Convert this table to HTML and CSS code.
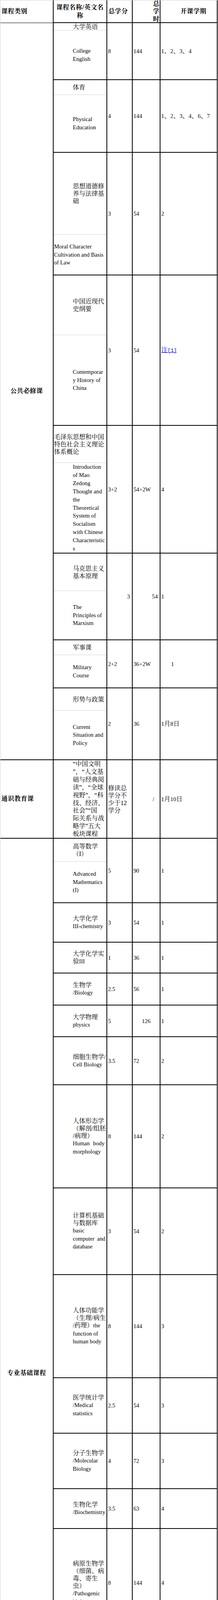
FILE: index.html
```html
<!DOCTYPE html>
<html lang="zh">
<head>
<meta charset="utf-8">
<title>课程设置</title>
<link rel="stylesheet" href="styles.css">
</head>
<body>
<div class="sheet">
  <div class="c cat hd left">课程类别</div>
  <div class="c hd hname"><div>课程名称/英文名<br>称</div></div>
  <div class="c hd hcred">总学分</div>
  <div class="c hd hstack"><div>总<br>学<br>时</div></div>
  <div class="c hd hterm">开课学期</div>

  <div class="c cat hd thick span8">公共必修课</div>

  <div class="c nm split"><div class="top t19 in"><div class="z">大学英语</div></div><div class="bot in"><div class="e">College<br>English</div></div></div>
  <div class="c v">8</div><div class="c v">144</div><div class="c v">1<span class="zc">、</span>2<span class="zc">、</span>3<span class="zc">、</span>4</div>

  <div class="c nm split"><div class="top t38 in"><div class="z">体育</div></div><div class="bot in"><div class="e">Physical<br>Education</div></div></div>
  <div class="c v">4</div><div class="c v">144</div><div class="c v">1<span class="zc">、</span>2<span class="zc">、</span>3<span class="zc">、</span>4<span class="zc">、</span>6<span class="zc">、</span>7</div>

  <div class="c nm split"><div class="top t210 in"><div class="z">思想道德修<br>养与法律基<br>础</div></div><div class="bot"><div class="e">Moral Character<br>Cultivation and Basis<br>of Law</div></div></div>
  <div class="c v">3</div><div class="c v">54</div><div class="c v">2</div>

  <div class="c nm split"><div class="top t153 in"><div class="z">中国近现代<br>史纲要</div></div><div class="bot in"><div class="e">Contemporar<br>y History of<br>China</div></div></div>
  <div class="c v">3</div><div class="c v">54</div><div class="c v"><a class="note" href="#">注<span class="br">[1]</span></a></div>

  <div class="c nm split"><div class="top t95"><div class="z">毛泽东思想和中国<br>特色社会主义理论<br>体系概论</div></div><div class="bot in"><div class="e l21">Introduction<br>of Mao<br>Zedong<br>Thought and<br>the<br>Theoretical<br>System of<br>Socialism<br>with Chinese<br>Characteristic<br>s</div></div></div>
  <div class="c v">3+2</div><div class="c v">54+2W</div><div class="c v">4</div>

  <div class="c nm split"><div class="top t96 in"><div class="z">马克思主义<br>基本原理</div></div><div class="bot in"><div class="e">The<br>Principles of<br>Marxism</div></div></div>
  <div class="c v vr">3</div><div class="c v vr">54</div><div class="c v">1</div>

  <div class="c nm split"><div class="top t38 in"><div class="z">军事课</div></div><div class="bot in"><div class="e">Military<br>Course</div></div></div>
  <div class="c v">2+2</div><div class="c v">36+2W</div><div class="c v p27">1</div>

  <div class="c nm split"><div class="top t57 in"><div class="z">形势与政策</div></div><div class="bot in"><div class="e">Current<br>Situation and<br>Policy</div></div></div>
  <div class="c v">2</div><div class="c v">36</div><div class="c v">1<span class="zc">月</span>8<span class="zc">日</span></div>

  <div class="c cat hd thick left">通识教育课</div>
  <div class="c nm in"><div class="z tall">“中国文明<br>”，“人文基<br>础与经典阅<br>读”，“全球<br>视野”，“科<br>技、经济、<br>社会”“国<br>际关系与战<br>略学”五大<br>板块课程</div></div>
  <div class="c v"><div class="z">修读总<br>学分不<br>少于12<br>学分</div></div>
  <div class="c v p51">/</div>
  <div class="c v">1<span class="zc">月</span>10<span class="zc">日</span></div>

  <div class="c cat hd span19">专业基础课程</div>

  <div class="c nm split"><div class="top t59 in"><div class="z">高等数学<br>（I）</div></div><div class="bot in"><div class="e">Advanced<br>Mathematics<br>(I)</div></div></div>
  <div class="c v">5</div><div class="c v">90</div><div class="c v">1</div>

  <div class="c nm in"><div class="z">大学化学</div><div class="e">III-chemistry</div></div>
  <div class="c v">3</div><div class="c v">54</div><div class="c v">1</div>

  <div class="c nm in"><div class="z">大学化学实</div><div class="e"><span class="zc">验</span>III</div></div>
  <div class="c v">1</div><div class="c v">36</div><div class="c v">1</div>

  <div class="c nm in"><div class="z">生物学</div><div class="e">/Biology</div></div>
  <div class="c v">2.5</div><div class="c v">56</div><div class="c v">1</div>

  <div class="c nm in"><div class="z">大学物理</div><div class="e">physics</div></div>
  <div class="c v">5</div><div class="c v vc">126</div><div class="c v">1</div>

  <div class="c nm in"><div class="z">细胞生物学/</div><div class="e">Cell Biology</div></div>
  <div class="c v">3.5</div><div class="c v">72</div><div class="c v">2</div>

  <div class="c nm in"><div class="z">人体形态学<br>（解剖/组胚<br>/病理）</div><div class="e"><span class="ws">Human body</span><br>morphology</div></div>
  <div class="c v">8</div><div class="c v">144</div><div class="c v">2</div>

  <div class="c nm in"><div class="z">计算机基础<br>与数据库</div><div class="e">basic<br><span class="ws2">computer and</span><br>database</div></div>
  <div class="c v">3</div><div class="c v">54</div><div class="c v">2</div>

  <div class="c nm in"><div class="z">人体功能学<br>（生理/病生</div><div class="e">/<span class="zc">药理）</span>the<br>function of<br>human body</div></div>
  <div class="c v">8</div><div class="c v">144</div><div class="c v">3</div>

  <div class="c nm in"><div class="z">医学统计学</div><div class="e">/Medical<br>statistics</div></div>
  <div class="c v">2.5</div><div class="c v">54</div><div class="c v">3</div>

  <div class="c nm in"><div class="z">分子生物学</div><div class="e">/Molecular<br>Biology</div></div>
  <div class="c v">4</div><div class="c v">72</div><div class="c v">3</div>

  <div class="c nm in"><div class="z">生物化学</div><div class="e">/Biochemistry</div></div>
  <div class="c v">3.5</div><div class="c v">63</div><div class="c v">4</div>

  <div class="c nm in"><div class="z">病原生物学<br>（细菌、病<br>毒、寄生<br>虫）</div><div class="e">/Pathogenic<br>biology</div></div>
  <div class="c v">8</div><div class="c v">144</div><div class="c v">4</div>

  <div class="c nm in"><div class="z">医学免疫学</div><div class="e">/Medical<br>Immunology</div></div>
  <div class="c v">3</div><div class="c v">54</div><div class="c v">4</div>

  <div class="c nm"><div class="z">分子医学技能</div><div class="e">/Molecular Medicine<br>Skills</div></div>
  <div class="c v">2</div><div class="c v">72</div><div class="c v">4</div>

  <div class="c nm in"><div class="z">遗传学</div><div class="e">Genetics</div></div>
  <div class="c v">4</div><div class="c v">72</div><div class="c v">5</div>

  <div class="c nm in"><div class="z">卫生毒理学</div><div class="e">Hygiene<br>Toxicology</div></div>
  <div class="c v">5</div><div class="c v">90</div><div class="c v">5</div>

  <div class="c nm in"><div class="z">基因工程</div><div class="e">Genetic<br>engineering</div></div>
  <div class="c v">3</div><div class="c v">54</div><div class="c v">5</div>

  <div class="c nm in"><div class="z">生态学与入<br>侵生物学</div><div class="e">Ecology and<br>Invasive<br>Biology</div></div>
  <div class="c v">2</div><div class="c v">36</div><div class="c v">5</div>

  <div class="c cat hd span11">专业核心课</div>

  <div class="c nm"><div class="z">流行病学与循证医</div><div class="e"><span class="zc">学</span>/Epidemiology and<br>Evidence-based<br>Medicine</div></div>
  <div class="c v">2.5</div><div class="c v">54</div><div class="c v">6</div>

  <div class="c nm"><div class="e"><span class="zc">内科学理论</span>/Theory<br>of Internal Medicine</div></div>
  <div class="c v">4</div><div class="c v vc">72</div><div class="c v">6</div>

  <div class="c nm"><div class="z">儿科学理论</div><div class="e">/Pediatrics Theory</div></div>
  <div class="c v">3</div><div class="c v vc">48</div><div class="c v">6</div>

  <div class="c nm"><div class="e"><span class="zc">外科学理论</span>/Theory<br>of Surgery</div></div>
  <div class="c v">4</div><div class="c v vc">72</div><div class="c v">6</div>

  <div class="c nm"><div class="z">妇产科学理论</div><div class="e">/Gynecology &amp;<br>Obstetrics Theory</div></div>
  <div class="c v">3</div><div class="c v vc">48</div><div class="c v">6</div>

  <div class="c nm"><div class="z">传染病学理论</div><div class="e">/Infectious Diseases</div></div>
  <div class="c v">2</div><div class="c v vc">32</div><div class="c v">6</div>

  <div class="c nm"><div class="z">核医学和放射医学</div><div class="e">nuclear medicine and<br>Radioecology</div></div>
  <div class="c v">2</div><div class="c v">36</div><div class="c v">6</div>

  <div class="c nm"><div class="e"><span class="zc">临床见习</span>/Clerkship<br>of clinical Medicine</div></div>
  <div class="c v">12</div><div class="c v">12W</div><div class="c v">7</div>

  <div class="c nm"><div class="z">基础医学综合性大</div><div class="e"><span class="zc">实验</span>Comprehensive<br>experiment of Basic<br>Medicine</div></div>
  <div class="c v">5</div><div class="c v">180</div><div class="c v">7</div>

  <div class="c nm"><div class="z">本科阶段专业实习</div><div class="e">/Special Practice</div></div>
  <div class="c v">60</div><div class="c v">60W</div><div class="c v">8<span class="zc">、</span>9<span class="zc">、</span>10</div>

  <div class="c nm"><div class="z">本科毕业论文答辩</div><div class="e">/Diploma Project and<br>Thesis</div></div>
  <div class="c v">4</div><div class="c v">4W</div><div class="c v">10</div>

  <div class="c cat hd span16">专业选修课</div>

  <div class="c nm"><div class="e"><span class="zc">基础医学导论</span>/An<br>Introduction to Basic<br>Medicine</div></div>
  <div class="c v">1</div><div class="c v">18</div><div class="c v">2</div>

  <div class="c nm"><div class="e"><span class="zc">法医学概论</span>/An<br>Introduction to<br>Forensic Medicine</div></div>
  <div class="c v">1</div><div class="c v">18</div><div class="c v">2</div>

  <div class="c nm"><div class="z">临床医学概论和医</div><div class="e"><span class="zc">学史</span>Introduction to<br>clinical medicine and<br>medical history</div></div>
  <div class="c v">1</div><div class="c v">18</div><div class="c v">2</div>

  <div class="c nm"><div class="z">医学信息技术基础</div><div class="e">/Fundamentals of<br>Information<br>Technology for<br>Medicine</div></div>
  <div class="c v">3</div><div class="c v">72</div><div class="c v">1</div>

  <div class="c nm"><div class="z">医学伦理学</div><div class="e">/Medical Ethics</div></div>
  <div class="c v">2</div><div class="c v">36</div><div class="c v">3</div>

  <div class="c nm"><div class="z">实验生理科学</div><div class="e">/Experimental<br>Physiological Science</div></div>
  <div class="c v">2</div><div class="c v">108</div><div class="c v">3<span class="zc">、</span>5</div>

  <div class="c nm"><div class="z">实验室生物安全</div><div class="e">/Laboratory and<br>Biosafety</div></div>
  <div class="c v">1</div><div class="c v">18</div><div class="c v">2</div>

  <div class="c nm"><div class="z">热带病与全球健康</div><div class="e">/Tropical diseases<br>and global health</div></div>
  <div class="c v">3</div><div class="c v">72</div><div class="c v">5</div>

  <div class="c nm"><div class="e"><span class="zc">媒介生物学</span>Vector<br>biology</div></div>
  <div class="c v">2</div><div class="c v">36</div><div class="c v">5</div>

  <div class="c nm in"><div class="z">医学英语</div><div class="e">/Medical<br>English</div></div>
  <div class="c v">2</div><div class="c v">40</div><div class="c v">6</div>

  <div class="c nm in"><div class="z">生物信息学</div><div class="e">/Bioinformatic<br>s</div></div>
  <div class="c v">2.5</div><div class="c v">54</div><div class="c v">8</div>

  <div class="c nm in"><div class="z">医学文献检</div><div class="e"><span class="zc">索</span>/Medical<br>Literature<br>Retrieval and<br>Utilization</div></div>
  <div class="c v">2</div><div class="c v">36</div><div class="c v">4</div>

  <div class="c nm in"><div class="z">科研文献导<br>读</div><div class="e">/Introduction<br>for Scientific<br>Research<br>Articles</div></div>
  <div class="c v">2</div><div class="c v">36</div><div class="c v">7</div>

  <div class="c nm in"><div class="z">神经生物学</div><div class="e">neurobiology</div></div>
  <div class="c v">2</div><div class="c v">36</div><div class="c v">7</div>

  <div class="c nm"><div class="e"><span class="zc">医学信息学</span> medical<br>informatics</div></div>
  <div class="c v">2</div><div class="c v">36</div><div class="c v">8</div>

  <div class="c nm"><div class="z">前沿科研讲座</div><div class="e">/Scientific research<br>lecture</div></div>
  <div class="c v">8</div><div class="c v">144</div><div class="c v">1<span class="zc">月</span>10<span class="zc">日</span></div>
</div>
</body>
</html>
```

FILE: styles.css
```css
html, body {
  margin: 0;
  padding: 0;
  background: #fff;
}

.sheet {
  display: grid;
  width: max-content;
  grid-template-columns: 136px 137px 65px 71px 146px;
  grid-template-rows:
    58px 146px 186px 314px 385px 327px 222px 123px 184px 201px
    165px 101px 79px 82px 81px 123px 264px 222px 264px 142px
    142px 102px 277px 163px 82px 82px 142px 122px 103px 83px
    43px 41px 43px 62px 41px 62px 43px 83px 41px 63px
    63px 64px 83px 104px 41px 62px 64px 62px 42px 63px
    61px 105px 122px 43px 44px 61px;
  border-top: 1px solid #d0d0d0;
  border-left: 1px solid #d0d0d0;
  font-family: "Liberation Serif", "Noto Serif CJK SC", "Noto Sans CJK SC", serif;
  font-size: 14.67px;
  line-height: 20.6px;
  color: #000;
}

.c {
  box-sizing: border-box;
  border-right: 2px solid #000;
  border-bottom: 2px solid #000;
  min-width: 0;
  min-height: 0;
}

.hd {
  font-weight: bold;
  font-size: 16px;
  letter-spacing: 0.6px;
  white-space: nowrap;
}

.cat {
  display: flex;
  align-items: center;
  justify-content: center;
  border-bottom-width: 1px;
}
.cat.thick { border-bottom-width: 2px; }
.cat.left {
  justify-content: flex-start;
  padding-left: 2.5px;
}
.span8 { grid-row: span 8; }
.span11 { grid-row: span 11; }
.span16 { grid-row: span 16; }
.span19 { grid-row: span 19; }

.hname {
  display: flex;
  align-items: center;
  justify-content: center;
  text-align: center;
  line-height: 21px;
}
.hcred {
  display: flex;
  align-items: center;
  padding-left: 3px;
}
.hstack {
  display: flex;
  align-items: center;
  justify-content: flex-end;
  padding-right: 1px;
  line-height: 19.3px;
  letter-spacing: 0;
}
.hterm {
  display: flex;
  align-items: center;
  padding-left: 51px;
}

.v {
  display: flex;
  align-items: center;
  padding-left: 2px;
  white-space: nowrap;
  line-height: 20px;
}
.vr {
  justify-content: flex-end;
  padding-right: 5px;
}
.vc {
  justify-content: center;
  padding-left: 0;
}
.p27 { padding-left: 27px; }
.p51 { padding-left: 51px; }

.nm {
  display: flex;
  flex-direction: column;
  justify-content: center;
  padding-left: 1px;
}
.nm.split {
  padding-left: 0;
  justify-content: flex-start;
}
.top {
  flex: none;
  box-sizing: border-box;
  display: flex;
  flex-direction: column;
  justify-content: center;
  border-bottom: 1px solid #d4d4d4;
  padding-left: 1px;
}
.bot {
  flex: 1;
  min-height: 0;
  display: flex;
  flex-direction: column;
  justify-content: center;
  padding-left: 1px;
}
.in { padding-left: 49px; }

.t19 { height: 19px; }
.t38 { height: 38px; }
.t57 { height: 57px; }
.t59 { height: 59px; }
.t95 { height: 95px; }
.t96 { height: 96px; }
.t153 { height: 153px; }
.t210 { height: 210px; }

.z {
  font-size: 16px;
  line-height: 19px;
  white-space: nowrap;
}
.z.tall { line-height: 19.9px; }
.e {
  line-height: 20.6px;
  white-space: nowrap;
}
.e.l21 { line-height: 20.9px; }
.zc {
  font-size: 16px;
  line-height: 16px;
}
.ws { word-spacing: 5px; }
.ws2 { word-spacing: 3px; }

.note {
  color: #0000ff;
  text-decoration: underline;
  font-size: 16px;
}
.note .br {
  font-family: "Liberation Mono", monospace;
  font-size: 13.33px;
}
```
